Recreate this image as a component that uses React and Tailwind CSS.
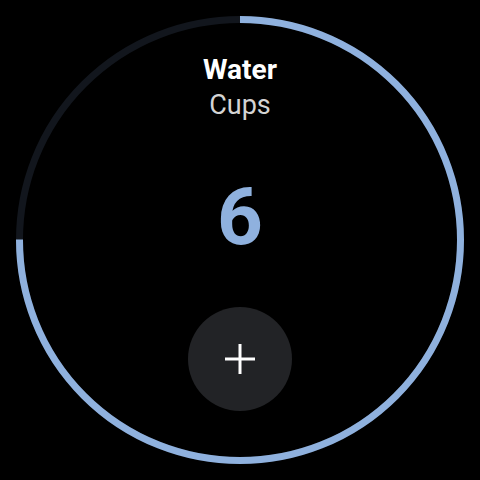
import React from "react";

const R = 220.5;
const C = 2 * Math.PI * R;

const Ring = ({ progress = 0.75 }) => (
    <svg className="absolute inset-0" width="480" height="480" viewBox="0 0 480 480">
        <circle cx="240" cy="240" r={R} fill="none" stroke="#12161d" strokeWidth="7" />
        <circle
            cx="240"
            cy="240"
            r={R}
            fill="none"
            stroke="#8fb1de"
            strokeWidth="7"
            strokeDasharray={`${C * progress} ${C}`}
            transform="rotate(-90 240 240)"
        />
    </svg>
);

export default function App() {
    return (
        <div className="relative w-[480px] h-[480px] bg-black overflow-hidden" style={{ fontFamily: "Roboto, 'Liberation Sans', sans-serif" }}>
            <Ring />
            <div className="relative flex flex-col items-center pt-[54px]">
                <div className="text-white font-bold text-[28px] leading-[32px]">Water</div>
                <div className="text-[#d4d4d4] text-[27px] leading-[32px] mt-[3px]">Cups</div>
                <div className="text-[#8fb1de] font-bold text-[80px] leading-[80px] mt-[56px]">6</div>
                <button className="mt-[50px] w-[104px] h-[104px] rounded-full bg-[#222326] flex items-center justify-center">
                    <svg width="32" height="32" viewBox="0 0 32 32">
                        <path d="M16 1v30M1 16h30" stroke="white" strokeWidth="3" />
                    </svg>
                </button>
            </div>
        </div>
    );
}
